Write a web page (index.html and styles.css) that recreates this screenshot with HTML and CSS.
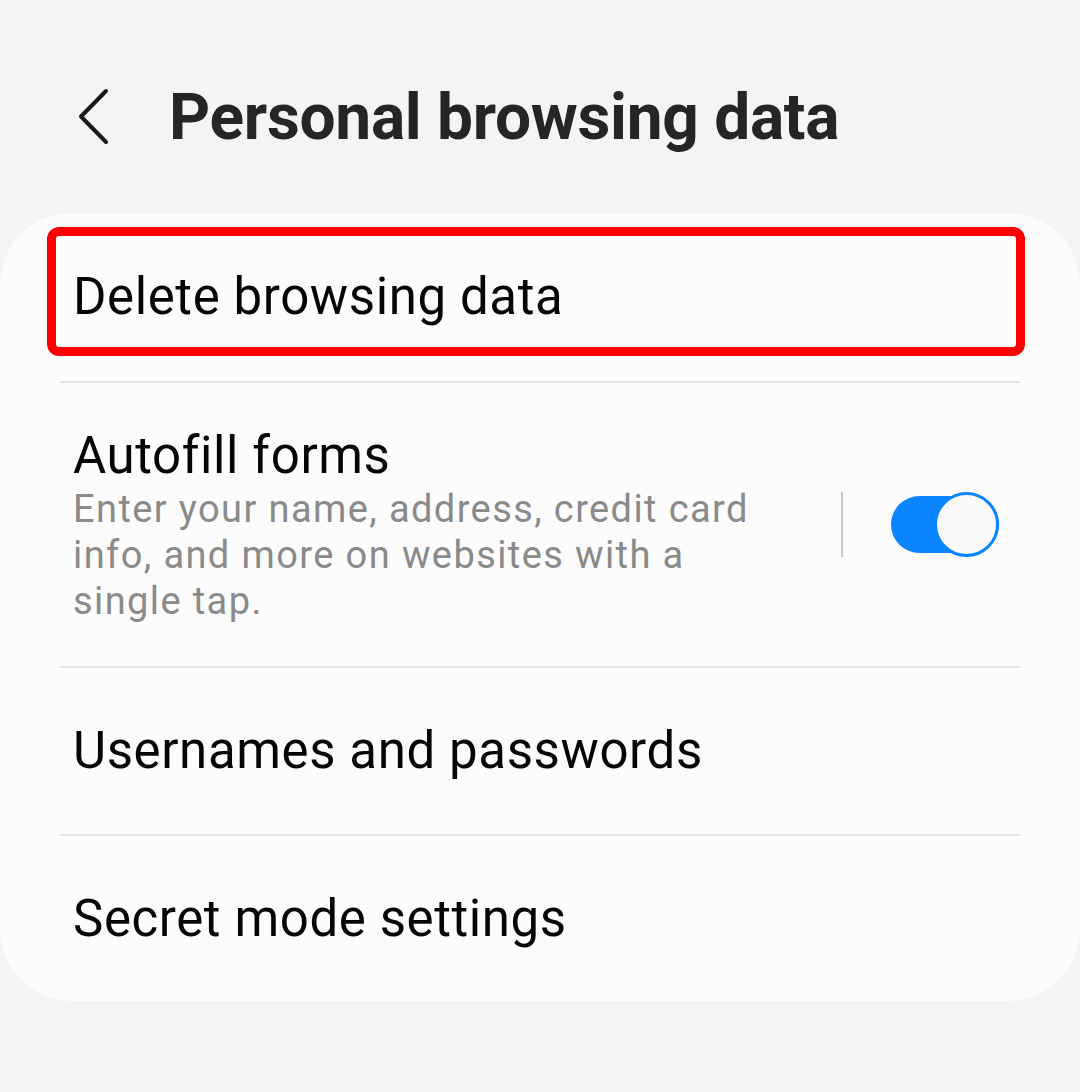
FILE: index.html
```html
<!DOCTYPE html>
<html lang="en">
<head>
<meta charset="utf-8">
<title>Personal browsing data</title>
<link rel="stylesheet" href="styles.css">
</head>
<body>
<header class="topbar">
  <button class="back" aria-label="Back">
    <svg width="34" height="58" viewBox="0 0 34 58"><path d="M30 3 L5 28.5 L30 54" fill="none" stroke="#1a1a1a" stroke-width="4" stroke-linecap="round" stroke-linejoin="round"/></svg>
  </button>
  <h1 class="title">Personal browsing data</h1>
</header>
<main class="card">
  <div class="row row-first">
    <div class="highlight"><span class="label">Delete browsing data</span></div>
  </div>
  <div class="divider"></div>
  <div class="row row-switch">
    <div class="text">
      <div class="label">Autofill forms</div>
      <div class="sub">Enter your name, address, credit card info, and more on websites with a single tap.</div>
    </div>
    <div class="vsep"></div>
    <div class="switch"><span class="knob"></span></div>
  </div>
  <div class="divider"></div>
  <div class="row row-plain"><span class="label">Usernames and passwords</span></div>
  <div class="divider"></div>
  <div class="row row-plain row-last"><span class="label">Secret mode settings</span></div>
</main>
</body>
</html>
```

FILE: styles.css
```css
html, body {
  margin: 0;
  padding: 0;
  background: #f4f4f4;
  font-family: Roboto, "Liberation Sans", sans-serif;
  width: 1080px;
  height: 1092px;
  overflow: hidden;
}
.topbar {
  height: 213px;
  display: flex;
  align-items: flex-start;
  box-sizing: border-box;
  padding-top: 80px;
}
.back {
  background: none;
  border: 0;
  padding: 0;
  margin: 8px 0 0 76px;
  width: 34px;
  height: 58px;
  display: block;
}
.back svg { display: block; }
.title {
  margin: 0 0 0 59px;
  font-size: 64px;
  font-weight: 700;
  color: #252525;
  letter-spacing: -0.3px;
  line-height: 76px;
}
.card {
  background: #fcfcfc;
  border-radius: 72px;
  height: 788px;
  box-sizing: border-box;
}
.label {
  font-size: 51px;
  color: #050505;
  line-height: 60px;
  letter-spacing: 0.6px;
}
.row-first {
  height: 168px;
  box-sizing: border-box;
  padding: 14px 55px 0 47px;
}
.highlight {
  height: 129px;
  box-sizing: border-box;
  border: 9px solid #ff0000;
  border-radius: 12px;
  display: flex;
  align-items: center;
  padding-left: 17px;
  padding-top: 10px;
}
.divider {
  height: 2px;
  background: #e2e2e2;
  margin: 0 60px;
}
.row-switch {
  height: 283px;
  box-sizing: border-box;
  display: flex;
  align-items: center;
  padding: 0 81px 0 73px;
}
.row-switch .text { flex: 1; }
.sub {
  font-size: 38px;
  line-height: 46px;
  color: #8a8a8a;
  width: 700px;
  letter-spacing: 1.4px;
  margin-top: 0;
}
.vsep {
  width: 2px;
  height: 65px;
  background: #c6c6c6;
  margin: 0 48px 0 22px;
}
.switch {
  position: relative;
  width: 108px;
  height: 57px;
  background: #0a84ff;
  border-radius: 29px;
}
.knob {
  position: absolute;
  right: 0;
  top: -4px;
  width: 65px;
  height: 65px;
  box-sizing: border-box;
  border-radius: 50%;
  background: #fafafa;
  border: 3px solid #0a84ff;
}
.row-plain {
  height: 166px;
  box-sizing: border-box;
  display: flex;
  align-items: center;
  padding-left: 73px;
}
```
